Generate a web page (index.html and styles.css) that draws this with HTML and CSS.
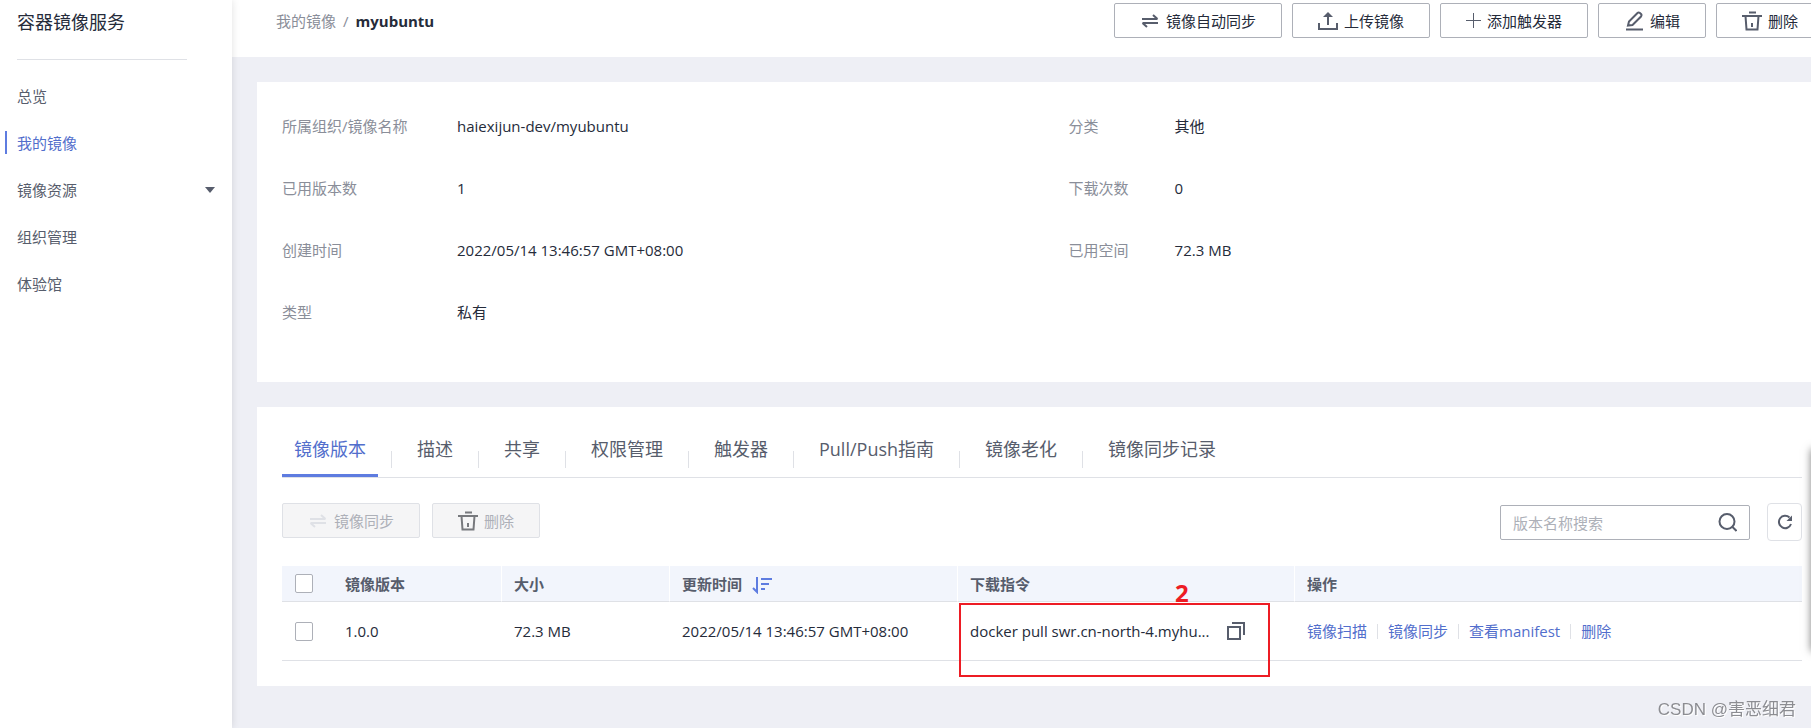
FILE: index.html
```html
<!DOCTYPE html>
<html lang="zh-CN">
<head>
    <meta charset="UTF-8">
    <meta name="viewport" content="width=device-width, initial-scale=1.0">
    <title>容器镜像服务</title>
    <link rel="stylesheet" href="styles.css">
</head>
<body>
    <aside class="sidebar">
        <h1>容器镜像服务</h1>
        <nav>
            <a href="#">总览</a>
            <a href="#" class="active">我的镜像</a>
            <a href="#">镜像资源 <span class="caret"></span></a>
            <a href="#">组织管理</a>
            <a href="#">体验馆</a>
        </nav>
    </aside>
    <div class="page">
        <header class="topbar">
            <div class="breadcrumb"><a href="#">我的镜像</a><span>/</span><b>myubuntu</b></div>
            <div class="actions">
                <button class="btn"><svg class="icon" viewBox="0 0 20 20"><path d="M2 8h15.500M13 4l4.500 4M18 12H2.500M7 16l-4.500-4"/></svg>镜像自动同步</button>
                <button class="btn"><svg class="icon" viewBox="0 0 20 20"><path d="M1 12v6h18v-6M10 14V3"/><path class="fill" d="M10 1l5 5H5z"/></svg>上传镜像</button>
                <button class="btn"><svg class="icon plus" viewBox="0 0 15 20"><path d="M7.500 2v15M0 9.500h15"/></svg>添加触发器</button>
                <button class="btn"><svg class="icon" viewBox="0 0 20 20"><path d="M2 18.500h17M4 14.500l1-4 8.500-8.500q1-1 2.500 0l1 1q1 1 0 2.500L8.500 14z"/></svg>编辑</button>
                <button class="btn"><svg class="icon" viewBox="0 0 20 20"><path d="M7 1.500h7M0 5h20M3.500 5l1 13.500h11L16.500 5M10 12v4"/></svg>删除</button>
            </div>
        </header>

        <main>
            <section class="card details">
                <dl>
                    <dt>所属组织/镜像名称</dt><dd>haiexijun-dev/myubuntu</dd>
                    <dt>分类</dt><dd>其他</dd>
                    <dt>已用版本数</dt><dd>1</dd>
                    <dt>下载次数</dt><dd>0</dd>
                    <dt>创建时间</dt><dd>2022/05/14 13:46:57 GMT+08:00</dd>
                    <dt>已用空间</dt><dd>72.3 MB</dd>
                    <dt>类型</dt><dd>私有</dd>
                </dl>
            </section>

            <section class="card versions">
                <nav class="tabs">
                    <a href="#" class="active">镜像版本</a>
                    <a href="#">描述</a>
                    <a href="#">共享</a>
                    <a href="#">权限管理</a>
                    <a href="#">触发器</a>
                    <a href="#">Pull/Push指南</a>
                    <a href="#">镜像老化</a>
                    <a href="#">镜像同步记录</a>
                </nav>

                <div class="toolbar">
                    <button class="btn" disabled><svg class="icon faded" viewBox="0 0 20 20"><path d="M2 8h15.500M13 4l4.500 4M18 12H2.500M7 16l-4.500-4"/></svg>镜像同步</button>
                    <button class="btn" disabled><svg class="icon" viewBox="0 0 20 20"><path d="M7 1.500h7M0 5h20M3.500 5l1 13.500h11L16.500 5M10 12v4"/></svg>删除</button>
                    <div class="search">
                        <input type="text" placeholder="版本名称搜索" aria-label="版本名称搜索">
                        <button class="icon-btn" aria-label="搜索"><svg class="icon" viewBox="0 0 20 20"><circle cx="10" cy="8.500" r="7.500"/><path d="M15 13.500L19.500 18"/></svg></button>
                    </div>
                    <button class="refresh" aria-label="刷新"><svg class="icon" viewBox="0 0 20 20"><path d="M14.500 5.500A6.200 6.200 0 1 0 16 12"/><path class="fill" d="M17 3.500v5.500h-5.500z"/></svg></button>
                </div>

                <table>
                    <colgroup>
                        <col class="col-check">
                        <col class="col-name">
                        <col class="col-size">
                        <col class="col-time">
                        <col class="col-cmd">
                        <col>
                    </colgroup>
                    <thead>
                        <tr>
                            <th class="check"><input type="checkbox" aria-label="全选"></th>
                            <th>镜像版本</th>
                            <th>大小</th>
                            <th><div class="cell">更新时间 <svg class="icon sort" viewBox="0 0 20 20"><path d="M5 3v15L1 14M9 5h11M9 10h8M9 15h4"/></svg></div></th>
                            <th>下载指令</th>
                            <th>操作</th>
                        </tr>
                    </thead>
                    <tbody>
                        <tr>
                            <td class="check"><input type="checkbox" aria-label="1.0.0"></td>
                            <td>1.0.0</td>
                            <td>72.3 MB</td>
                            <td>2022/05/14 13:46:57 GMT+08:00</td>
                            <td class="command">
                                <div class="cell">
                                    <span class="command-text">docker pull swr.cn-north-4.myhu...</span>
                                    <button class="icon-btn" aria-label="复制"><svg class="icon" viewBox="0 0 20 20"><path d="M2 6h12v12H2zM6 2h12v12"/></svg></button>
                                </div>
                                <div class="mark"><span>2</span></div>
                            </td>
                            <td>
                                <div class="links">
                                    <a href="#">镜像扫描</a>
                                    <a href="#">镜像同步</a>
                                    <a href="#">查看manifest</a>
                                    <a href="#">删除</a>
                                </div>
                            </td>
                        </tr>
                    </tbody>
                </table>
            </section>
        </main>
    </div>
    <div class="drawer"></div>
    <div class="watermark">CSDN @害恶细君</div>
</body>
</html>
```

FILE: styles.css
```css
* {
    box-sizing: border-box;
}

body {
    margin: 0;
    min-height: 100vh;
    display: flex;
    overflow: hidden;
    background: #eeeff5;
    color: #252b3a;
    font-family: "Open Sans", "Noto Sans CJK SC", sans-serif;
    font-size: 15px;
    line-height: 20px;
}

a {
    color: inherit;
    text-decoration: none;
}

button,
input {
    font: inherit;
    color: inherit;
}

button {
    cursor: pointer;
}

.icon {
    width: 20px;
    height: 20px;
    flex: none;
    fill: none;
    stroke: #575d6c;
    stroke-width: 2;
}

.icon .fill {
    fill: #575d6c;
    stroke: none;
}

.icon-btn {
    display: flex;
    padding: 0;
    border: none;
    background: none;
}

/* Sidebar */
.sidebar {
    position: relative;
    flex: none;
    width: 232px;
    padding: 10px 0 0 5px;
    background: #fff;
    box-shadow: 0 0 8px rgba(0, 0, 0, 0.12);
}

.sidebar h1 {
    margin: 0 45px 14px 12px;
    padding-bottom: 25px;
    border-bottom: 1px solid #dfe1e6;
    font-size: 18px;
    font-weight: normal;
    line-height: 24px;
}

.sidebar nav a {
    display: flex;
    align-items: center;
    justify-content: space-between;
    height: 23px;
    margin: 0 17px 24px 0;
    padding-left: 10px;
    border-left: 2px solid transparent;
    color: #575d6c;
}

.sidebar nav a:first-child {
    margin-top: 24px;
}

.sidebar nav a.active {
    border-color: #5e7ce0;
    color: #526ecc;
}

.caret {
    border: 5px solid transparent;
    border-top: 6px solid #575d6c;
    border-bottom: none;
}

/* Top bar */
.page {
    flex: 1;
    min-width: 0;
}

.topbar {
    display: flex;
    justify-content: space-between;
    height: 57px;
    margin-right: -13px;
    padding: 3px 0 0 44px;
    background: #fff;
}

.breadcrumb {
    display: flex;
    gap: 7px;
    height: 35px;
    align-items: center;
    color: #8a8e99;
}

.breadcrumb b {
    color: #252b3a;
}

.actions {
    display: flex;
    gap: 10px;
}

.btn {
    display: flex;
    align-items: center;
    gap: 6px;
    height: 35px;
    padding: 0 25px;
    border: 1px solid #adb0b8;
    border-radius: 2px;
    background: #fff;
    white-space: nowrap;
}

.btn .plus {
    width: 15px;
    stroke-width: 1;
}

.btn:disabled {
    border-color: #dfe1e6;
    background: #f5f5f6;
    color: #adb0b8;
    cursor: not-allowed;
}

.btn:disabled .icon {
    stroke: #77797d;
}

.btn:disabled .faded {
    stroke: #dfe1e6;
}

/* Cards */
main {
    padding: 25px 0 0 25px;
}

.card {
    margin-bottom: 25px;
    background: #fff;
}

.details {
    padding: 13px 0 39px 25px;
}

.details dl {
    display: grid;
    grid-template-columns: 175px 40% 106px 1fr;
    grid-auto-rows: 62px;
    align-items: center;
    margin: 0;
}

.details dt {
    color: #8a8e99;
}

.details dd {
    margin: 0;
}

.versions {
    padding: 15px 9px 25px 25px;
}

/* Tabs */
.tabs {
    display: flex;
    border-bottom: 1px solid #dfe1e6;
    color: #575d6c;
    font-size: 18px;
}

.tabs a {
    height: 55px;
    padding: 0 12px;
    line-height: 54px;
}

/* divider between two tabs */
.tabs a + a::before {
    content: "";
    display: inline-block;
    width: 1px;
    height: 17px;
    margin: 0 25px 0 1px;
    background: #dfe1e6;
    vertical-align: -12px;
}

.tabs .active {
    border-bottom: 3px solid #5e7ce0;
    color: #526ecc;
}

/* Toolbar */
.toolbar {
    display: flex;
    gap: 12px;
    margin: 25px 0;
}

.search {
    display: flex;
    align-items: center;
    width: 250px;
    height: 35px;
    margin: 2px 5px 0 auto;
    padding: 0 12px;
    border: 1px solid #adb0b8;
    border-radius: 2px;
}

.search input {
    flex: 1;
    min-width: 0;
    padding: 0;
    border: none;
    outline: none;
}

.search input::placeholder {
    color: #adb0b8;
}

.refresh {
    display: flex;
    align-items: center;
    justify-content: center;
    width: 35px;
    height: 38px;
    padding: 0;
    border: 1px solid #dfe1e6;
    border-radius: 4px;
    background: #fff;
}

/* Table */
table {
    width: 100%;
    border-collapse: separate;
    border-spacing: 0;
    table-layout: fixed;
}

.col-check {
    width: 51px;
}

.col-name {
    width: 169px;
}

.col-size {
    width: 168px;
}

.col-time {
    width: 288px;
}

.col-cmd {
    width: 337px;
}

th,
td {
    padding: 0 12px;
    border-bottom: 1px solid #dfe1e6;
    text-align: left;
}

th {
    height: 36px;
    border-right: 1px solid #fff;
    background: #f2f5fc;
    color: #575d6c;
}

th.check,
th:last-child {
    border-right: none;
}

td {
    height: 59px;
}

.check {
    padding-left: 13px;
}

.check input {
    appearance: none;
    display: block;
    width: 18px;
    height: 19px;
    margin: 0;
    border: 1px solid #adb0b8;
    border-radius: 2px;
    background: #fff;
}

.cell {
    display: flex;
    align-items: center;
    gap: 10px;
    white-space: nowrap;
}

.sort {
    stroke: #5e7ce0;
}

/* red frame over the download command */
.command {
    position: relative;
}

.command-text {
    width: 246px;
}

.mark {
    position: absolute;
    top: 1px;
    left: 1px;
    width: 311px;
    height: 74px;
    border: 2px solid #ed1c24;
    pointer-events: none;
}

.mark span {
    position: absolute;
    top: -24px;
    left: 214px;
    color: #ed1c24;
    font-size: 24px;
    font-weight: bold;
    line-height: 24px;
}

.links {
    display: flex;
    align-items: center;
    color: #526ecc;
    white-space: nowrap;
}

.links a + a {
    margin-left: 10px;
    padding-left: 11px;
    background: linear-gradient(#dfe1e6, #dfe1e6) left center / 1px 15px no-repeat;
}

/* Collapsed side panel, only its shadow reaches the page */
.drawer {
    position: fixed;
    top: 449px;
    left: 100%;
    width: 40px;
    height: 202px;
    box-shadow: 0 0 8px rgba(0, 0, 0, 0.5);
}

.watermark {
    position: fixed;
    right: 15px;
    bottom: 6px;
    color: #8c8d92;
    font-family: "Liberation Sans", "Noto Sans CJK SC", sans-serif;
    font-size: 17px;
    line-height: 24px;
    text-shadow: 1px 1px #fff;
}
```
